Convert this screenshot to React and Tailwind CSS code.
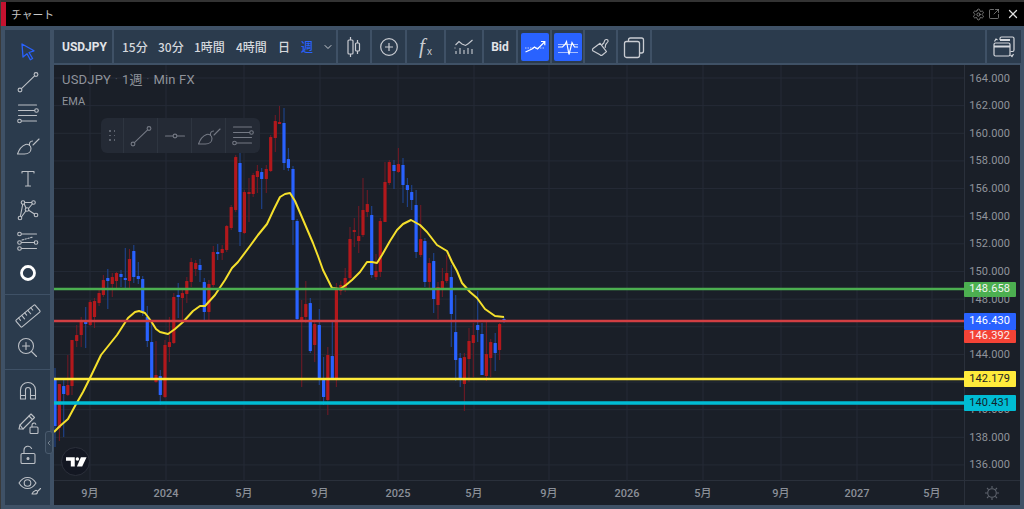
import React from "react";
import { Settings, SquareArrowOutUpRight, X, ChevronDown, ChevronLeft } from "lucide-react";

const CANDLES = [
  [55, 368, 447, 378, 426, "b"], [59.4, 384, 441, 384, 428, "r"], [63.7, 380, 437, 386, 394, "b"],
  [67.8, 355, 396, 385, 395, "r"], [72, 340, 395, 340, 386, "r"], [76.7, 325, 347, 335, 341, "r"],
  [81.2, 317, 347, 320, 335, "r"], [85.7, 307, 348, 321, 324, "b"], [90.2, 300, 326, 302, 325, "r"],
  [94.5, 298, 328, 301, 317, "r"], [99.1, 290, 306, 293, 303, "r"], [103.4, 275, 297, 280, 295, "r"],
  [107.8, 269, 309, 278, 281, "b"], [112.3, 273, 297, 277, 284, "r"], [116.5, 272, 289, 273, 281, "r"],
  [121, 270, 287, 274, 277, "b"], [125.3, 248, 288, 278, 280, "b"], [129.5, 249, 288, 259, 281, "r"],
  [133.8, 245, 283, 251, 277, "b"], [138.3, 262, 284, 276, 279, "b"], [142.7, 276, 316, 279, 312, "b"],
  [147.3, 306, 347, 317, 341, "b"], [151.7, 320, 380, 342, 378, "b"], [156, 341, 383, 375, 382, "r"],
  [160.3, 370, 405, 376, 395, "b"], [165, 340, 398, 345, 397, "r"], [169.4, 317, 362, 342, 347, "r"],
  [173.8, 293, 344, 297, 343, "r"], [178.2, 283, 318, 295, 297, "b"], [182.4, 288, 320, 293, 298, "r"],
  [186.8, 277, 303, 281, 294, "r"], [191.2, 258, 287, 262, 282, "r"], [195.7, 260, 276, 263, 269, "r"],
  [200, 259, 282, 265, 270, "b"], [204.3, 278, 320, 282, 312, "b"], [208.9, 280, 320, 284, 312, "r"],
  [213.3, 246, 287, 252, 285, "r"], [217.7, 244, 260, 252, 253, "b"], [222.2, 245, 260, 249, 253, "r"],
  [226.7, 225, 252, 226, 250, "r"], [231.2, 205, 230, 207, 228, "r"], [235.7, 155, 212, 157, 210, "r"],
  [240, 147, 246, 163, 232, "b"], [244.4, 190, 234, 192, 233, "r"], [249, 178, 222, 192, 194, "r"],
  [253.2, 173, 197, 175, 194, "r"], [257.4, 165, 193, 171, 177, "r"], [261.7, 168, 209, 172, 179, "b"],
  [266.3, 165, 193, 169, 179, "r"], [270.7, 135, 172, 137, 171, "r"], [275.3, 115, 152, 121, 138, "r"],
  [279.5, 106, 123, 122, 123, "r"], [284, 108, 170, 123, 163, "b"], [288.4, 148, 171, 159, 168, "b"],
  [293, 166, 245, 169, 220, "b"], [297.1, 219, 321, 221, 319, "b"], [301.7, 300, 387, 317, 322, "r"],
  [305.8, 281, 323, 304, 317, "r"], [310.3, 298, 353, 303, 351, "b"], [314.7, 320, 362, 324, 345, "r"],
  [319.3, 309, 385, 325, 378, "b"], [323.6, 357, 405, 380, 397, "b"], [327.8, 347, 415, 355, 400, "r"],
  [332.3, 320, 380, 356, 379, "b"], [336.4, 283, 387, 289, 378, "r"], [340.8, 281, 295, 285, 291, "r"],
  [345.2, 268, 292, 278, 288, "r"], [350, 227, 281, 239, 278, "r"], [354.3, 218, 247, 230, 232, "r"],
  [358.7, 206, 253, 236, 241, "r"], [363, 178, 237, 210, 235, "r"], [367.3, 190, 217, 204, 212, "r"],
  [371.7, 206, 278, 215, 275, "b"], [376, 254, 280, 271, 277, "r"], [380.3, 218, 277, 221, 272, "r"],
  [385, 162, 222, 182, 222, "r"], [389.3, 160, 185, 162, 183, "r"], [394, 160, 189, 165, 171, "b"],
  [398.4, 148, 173, 164, 172, "r"], [403, 158, 203, 165, 185, "b"], [407.4, 178, 207, 185, 190, "b"],
  [411.7, 185, 210, 192, 200, "b"], [416.1, 190, 258, 205, 252, "b"], [420.7, 205, 257, 239, 255, "r"],
  [424.9, 238, 287, 241, 282, "b"], [429.3, 258, 290, 263, 282, "r"], [433.7, 253, 313, 261, 299, "b"],
  [438, 282, 319, 287, 305, "r"], [442.4, 268, 297, 281, 289, "r"], [446.7, 255, 283, 273, 281, "r"],
  [451.3, 265, 347, 277, 314, "b"], [455.7, 295, 381, 332, 360, "b"], [460.2, 353, 387, 358, 380, "b"],
  [464.4, 353, 411, 357, 384, "r"], [469, 328, 382, 341, 359, "r"], [473.3, 323, 377, 335, 343, "r"],
  [477.7, 291, 342, 325, 330, "b"], [482, 323, 375, 334, 375, "b"], [486.4, 322, 381, 354, 376, "r"],
  [490.7, 339, 377, 342, 358, "r"], [495.2, 333, 371, 343, 353, "b"], [499.6, 323, 360, 324, 350, "r"],
  [504, 317, 323, 319, 322, "b"],
];

const EMA =
  "54,432 60,426 68,419 75,406 83,392 90,378 101,355 109,345 117,335 128,318 135,312 139,311 145,313 151,321 156,329 160,332 168,334 175,329 183,322 193,311 200,306 205,306 215,295 225,280 232,268 238,262 250,246 258,235 267,224 274,209 280,197 285,194 290,193 295,201 304,222 313,243 318,256 323,270 332,288 340,289 346,285 352,280 360,272 367,262 372,262 377,263 382,255 390,241 397,230 403,224 411,220 420,225 427,232 437,245 447,251 452,262 457,271 462,283 470,292 477,298 485,309 495,316 504,317";

const GRID_X = [90, 166, 244, 320, 398, 474, 549, 627, 703, 781, 857, 932];
const PRICES = ["164.000", "162.000", "160.000", "158.000", "156.000", "154.000", "152.000", "150.000", "148.000", "", "144.000", "", "140.000", "138.000", "136.000"];
const TIME = [["9月", 90], ["2024", 166], ["5月", 244], ["9月", 320], ["2025", 398], ["5月", 474], ["9月", 549], ["2026", 627], ["5月", 703], ["9月", 781], ["2027", 857], ["5月", 932]];
const TAGS = [
  ["148.658", "top-[217px] h-[15px] bg-[#4caf50] text-[#f2f5f2]"],
  ["146.430", "top-[248px] h-[17px] bg-[#2962ff] text-white"],
  ["146.392", "top-[265px] h-[13px] bg-[#f44336] text-[#fbeeee]"],
  ["142.179", "top-[306px] h-[16px] bg-[#ffeb3b] text-[#1b1f27]"],
  ["140.431", "top-[330px] h-[16px] bg-[#00bcd4] text-[#12222b]"],
];

const I = ({ children, s = 28, className = "" }) => (
  <svg width={s} height={s} viewBox="0 0 28 28" fill="none" stroke="currentColor" strokeWidth="1.1" strokeLinecap="round" strokeLinejoin="round" className={className}>
    {children}
  </svg>
);

const LineIcon = () => (<I><circle cx="6" cy="22" r="1.9" /><circle cx="22" cy="6.5" r="1.9" /><path d="M7.4 20.6 20.6 7.9" /></I>);
const LinesIcon = () => (<I><path d="M4.5 5h18M4.5 10.5h16M4.5 15.5h18M7.5 21h15" /><circle cx="22.5" cy="10.5" r="1.8" /><circle cx="5.5" cy="21" r="1.8" /></I>);
const BrushIcon = () => (<I><path d="M3.5 22h7c4 0 6.5-2.5 6.5-5.5 0-1.5-.8-2.8-2-3.6-1-.7-2.2-.9-3.4-.5C8 13.800 5 17.500 3.500 22Z" /><path d="M15.500 13.500c-.5-2.500.8-4.500 3-4.500" /><path d="M19 13l6-6" /></I>);

function SideBtn({ children, className = "" }) {
  return <div className={`h-[31.8px] flex items-center justify-center text-[#bcc0c6] ${className}`}>{children}</div>;
}

function LeftBar() {
  return (
    <div className="w-[45px] shrink-0 bg-[#2b3b4d] flex flex-col">
      <div className="h-[265px] pt-[5px] border-b border-[#3f5166]">
        <SideBtn>
          <svg width="24" height="24" viewBox="0 0 24 24" fill="none" stroke="#2962ff" strokeWidth="1.3" strokeLinejoin="round" className="translate-y-[1px]"><path d="M6 4l12 6.800-5 1.700 3.600 6-2.300 1.300-3.300-6L7 17Z" /></svg>
        </SideBtn>
        <SideBtn className="-translate-y-[1px]"><LineIcon /></SideBtn>
        <SideBtn><LinesIcon /></SideBtn>
        <SideBtn><BrushIcon /></SideBtn>
        <SideBtn><I><path d="M8 9V7.500h12V9M14 7.500V22M11.500 22h5" /></I></SideBtn>
        <SideBtn>
          <I>
            <circle cx="6" cy="22" r="1.800" /><circle cx="9" cy="6.500" r="1.800" /><circle cx="19.500" cy="6.500" r="1.800" /><circle cx="22" cy="19" r="1.800" /><circle cx="13" cy="13.500" r="1.800" />
            <path d="M6.400 20.200 8.700 8.300M10.200 8 12 12M18.300 8 14.500 12.500M14.700 14.300 20.400 18M7.400 21 11.800 15M10.800 6.500h6.800" />
          </I>
        </SideBtn>
        <SideBtn>
          <I>
            <path d="M7.500 6h15M7.500 14.500h13M7.500 20.500h15" /><path d="M8 12l11-3" strokeDasharray="1.500 1.500" />
            <circle cx="5.500" cy="6" r="1.800" /><circle cx="5.500" cy="14.500" r="1.800" /><circle cx="5.500" cy="20.500" r="1.800" /><circle cx="22" cy="14.500" r="1.800" />
          </I>
        </SideBtn>
        <SideBtn><svg width="20" height="20" viewBox="0 0 20 20" fill="none" stroke="#ffffff" strokeWidth="2.800"><circle cx="10" cy="10" r="6.500" /></svg></SideBtn>
      </div>
      <div className="h-[75px] pt-[5px] border-b border-[#3f5166]">
        <SideBtn>
          <I s={28}>
            <g transform="rotate(-40 14 14)">
              <rect x="1.500" y="9.500" width="25" height="9" rx="1" />
              <path d="M5.500 9.500v3M9.500 9.500v4.500M13.500 9.500v3M17.500 9.500v4.500M21.500 9.500v3" />
            </g>
          </I>
        </SideBtn>
        <SideBtn>
          <I>
            <circle cx="12" cy="12" r="7.500" /><path d="M12 8.500v7M8.500 12h7M17.500 17.500l5 5" />
          </I>
        </SideBtn>
      </div>
      <div className="flex-1 pt-[5px]">
        <SideBtn>
          <I>
            <path d="M6.500 22V13a7.500 7.500 0 0 1 15 0v9h-5v-9a2.500 2.500 0 0 0-5 0v9Z" /><path d="M6.500 18.500h5M16.500 18.500h5" />
          </I>
        </SideBtn>
        <SideBtn>
          <I>
            <path d="M5 20l1-4L17 5l3.500 3.500L9 20Z" /><path d="M6 16l3 4M15 7l3.500 3.500" />
            <rect x="16" y="18" width="8" height="6.500" rx="1" /><path d="M18 18v-2a2 2 0 0 1 3.800-.8" />
          </I>
        </SideBtn>
        <SideBtn className="translate-y-[1px]">
          <I>
            <rect x="7" y="12.500" width="14" height="10" rx="1.300" /><path d="M10 12.500V9a4 4 0 0 1 7.600-1.500" /><circle cx="14" cy="17.500" r="1" fill="currentColor" />
          </I>
        </SideBtn>
        <SideBtn>
          <I>
            <path d="M5 11c2.500-4 5.700-5.500 8.500-5.500S19.500 7 22 11c-2.500 4-5.700 5.500-8.500 5.500S7.500 15 5 11Z" /><circle cx="13.500" cy="11" r="3.300" />
            <path d="M18 22h3c1.500 0 2.500-1 2.500-2.300 0-1-1-1.500-2-1.200-1.500.5-3 2-3.500 3.500ZM24 19l2.500-2.500" />
          </I>
        </SideBtn>
      </div>
    </div>
  );
}

function Cell({ w, children }) {
  return <div className={`${w} shrink-0 h-full border-r-2 border-[#3f5166] flex items-center justify-center text-[#c9ccd2]`}>{children}</div>;
}

function TopBar() {
  const tf = "font-['Noto_Sans_CJK_JP',sans-serif] text-[12px] font-medium text-[#d5d8dd]";
  return (
    <div className="h-[33px] mr-[-1px] shrink-0 bg-[#2b3b4d] flex items-center">
      <div className="w-[60px] h-full shrink-0 border-r-2 border-[#3f5166] flex items-center pl-2 font-['Roboto',sans-serif] text-[12px] font-bold text-[#e2e4e8]">USDJPY</div>
      <div className={`w-[224px] h-full shrink-0 border-r-2 border-[#3f5166] flex items-center pl-2 whitespace-nowrap ${tf}`}>
        <span className="w-[36px] shrink-0">15分</span>
        <span className="w-[36px] shrink-0">30分</span>
        <span className="w-[42px] shrink-0">1時間</span>
        <span className="w-[42px] shrink-0">4時間</span>
        <span className="w-[23px] shrink-0">日</span>
        <span className="w-[21px] shrink-0 text-[#2962ff]">週</span>
        <ChevronDown size={12} className="text-[#c9ccd2] shrink-0" />
      </div>
      <Cell w="w-[34px]">
        <svg width="24" height="24" viewBox="0 0 24 24" fill="none" stroke="currentColor" strokeWidth="1.200"><rect x="6" y="5" width="5" height="14" rx="1" /><path d="M8.500 2v3M8.500 19v3M15.500 5v3M15.500 16v3" /><rect x="13.500" y="8" width="4" height="8" rx="1" /></svg>
      </Cell>
      <Cell w="w-[35px]">
        <svg width="24" height="24" viewBox="0 0 24 24" fill="none" stroke="currentColor" strokeWidth="1.200"><circle cx="12" cy="12" r="8.300" /><path d="M12 8v8M8 12h8" /></svg>
      </Cell>
      <Cell w="w-[39px]">
        <span className="flex items-end font-['Liberation_Serif',serif] italic text-[#c9ccd2] leading-none">
          <span className="text-[21px]">f</span>
          <span className="text-[10px] not-italic font-['Liberation_Sans',sans-serif] ml-[2px]">x</span>
        </span>
      </Cell>
      <Cell w="w-[38px]">
        <svg width="24" height="24" viewBox="0 0 24 24" fill="none" stroke="currentColor" strokeWidth="1.100"><path d="M3.500 10 7 6.500l3 2.500 3.500 1.500 3-2 4-3.500" /><path d="M4 19v-3M8 19v-6M12 19v-4M16 19v-6M20 19v-5" /><path d="M2.500 13h1" /></svg>
      </Cell>
      <Cell w="w-[34px]"><span className="font-['Roboto',sans-serif] text-[12px] font-bold text-[#e2e4e8]">Bid</span></Cell>
      <Cell w="w-[34px]">
        <div className="w-[28px] h-[28px] ml-[1px] rounded-[2px] bg-[#2962ff] flex items-center justify-center">
          <svg width="24" height="24" viewBox="0 0 24 24" fill="none" stroke="#fff" strokeWidth="1.200"><path d="M2 13h20" strokeWidth=".7" strokeDasharray="1.500 1" /><path d="M2.500 17 9 14l2.500-2 3 2 7-7M18 6.500h3.800v3.800" /></svg>
        </div>
      </Cell>
      <Cell w="w-[33px]">
        <div className="w-[28px] h-[28px] ml-[1px] rounded-[2px] bg-[#2962ff] flex items-center justify-center">
          <svg width="24" height="24" viewBox="0 0 24 24" fill="none" stroke="#fff" strokeWidth="1.200"><path d="M2 9.500h20M2 17.500h20" strokeWidth=".6" /><path d="M2 12h4.500l2.500-2.500 1.500-3 2.500 13 3-12 2.500 4.500H22" /></svg>
        </div>
      </Cell>
      <Cell w="w-[33px]">
        <svg width="22" height="22" viewBox="0 0 24 24" fill="none" stroke="currentColor" strokeWidth="1.300" strokeLinejoin="round"><path d="M3 14 11 8l7 9-4.500 3.800c-.8.600-1.800.5-2.500-.3L3 16c-.4-.7-.4-1.500 0-2Z" /><path d="M13 9.500l2-1.800 1-2.700c.5-1.200 2.700-1.700 3.500-.5.700 1.200 0 2.300-1 3l-1.500 2-.5 3.500" /></svg>
      </Cell>
      <Cell w="w-[34px]">
        <svg width="24" height="24" viewBox="0 0 24 24" fill="none" stroke="currentColor" strokeWidth="1.300"><rect x="2.500" y="6.500" width="15" height="16" rx="2" /><path d="M6.500 6.500V5a2 2 0 0 1 2-2h11a2 2 0 0 1 2 2v11a2 2 0 0 1-2 2h-2" /></svg>
      </Cell>
      <div className="flex-1 h-full border-r-2 border-[#3f5166]" />
      <div className="w-[34px] shrink-0 h-full flex items-center justify-center text-[#d5d8dd]">
        <svg width="26" height="26" viewBox="0 0 26 26" fill="none" stroke="currentColor" strokeWidth="1.200">
          <path d="M9 6V4.500A1.500 1.500 0 0 1 10.500 3h11A1.500 1.500 0 0 1 23 4.500V16a1.500 1.500 0 0 1-1.500 1.500h-2" />
          <rect x="3" y="9" width="16" height="13" rx="1.500" />
          <path d="M3 12.500h16M9 6h10" strokeWidth="2.200" />
          <path d="M3.500 7.500 5 5l1.500 1M22.500 20 21 22.500 19.500 21" />
        </svg>
      </div>
    </div>
  );
}

function Plot() {
  return (
    <svg width="910" height="416" viewBox="54 65 910 416" className="block">
      {PRICES.map((_, i) => (<line key={i} x1="54" x2="964" y1={78 + i * 27.64} y2={78 + i * 27.64} stroke="#252b36" strokeWidth="1" />))}
      {GRID_X.map((x) => (<line key={x} x1={x} x2={x} y1="65" y2="481" stroke="#252b36" strokeWidth="1" />))}
      {CANDLES.map(([x, wt, wb, bt, bb, c], i) => (
        <g key={i}>
          <line x1={x} x2={x} y1={wt} y2={wb} stroke={c === "r" ? "#6d1a25" : "#1f448f"} strokeWidth="1.100" />
          <rect x={x - 1.6} y={bt} width="3.200" height={Math.max(bb - bt, 2)} rx="0.500" fill={c === "r" ? "#b2181c" : "#2962ff"} />
        </g>
      ))}
      <polyline points={EMA} fill="none" stroke="#f5e02c" strokeWidth="2" strokeLinejoin="round" />
      <line x1="54" x2="964" y1="289" y2="289" stroke="#4caf50" strokeWidth="2.500" />
      <line x1="54" x2="964" y1="321" y2="321" stroke="#d23f43" strokeWidth="2.500" />
      <line x1="54" x2="964" y1="379" y2="379" stroke="#ffeb3b" strokeWidth="2.500" />
      <line x1="54" x2="964" y1="403" y2="403" stroke="#00bcd4" strokeWidth="3.500" />
    </svg>
  );
}

function Floating() {
  return (
    <div className="absolute left-[47px] top-[53px] w-[159px] h-[35px] rounded-[6px] bg-[#242a35] flex items-center text-[#747984]">
      <div className="w-[23px] h-full border-r border-[#2e3540] flex items-center justify-center">
        <div className="grid grid-cols-2 gap-x-[3px] gap-y-[3px]">
          {[0, 1, 2, 3, 4, 5].map((k) => (<span key={k} className="w-[1.500px] h-[1.500px] bg-[#5d636e]" />))}
        </div>
      </div>
      <div className="w-[34px] h-full border-r border-[#2e3540] flex items-center justify-center"><LineIcon /></div>
      <div className="w-[34px] h-full border-r border-[#2e3540] flex items-center justify-center">
        <I><path d="M4.500 14h7.500M16 14h7.500" /><circle cx="14" cy="14" r="1.900" /></I>
      </div>
      <div className="w-[34px] h-full border-r border-[#2e3540] flex items-center justify-center"><BrushIcon /></div>
      <div className="flex-1 h-full flex items-center justify-center"><LinesIcon /></div>
    </div>
  );
}

function Chart() {
  return (
    <div className="relative flex-1 bg-[#1a1f28] flex flex-col overflow-hidden font-['Roboto',sans-serif]">
      <div className="flex h-[416px] shrink-0 border-b border-[#2a303b]">
        <div className="relative w-[910px] shrink-0">
          <Plot />
          <div className="absolute left-[8px] top-[6px] flex items-center gap-[4px] text-[13px] leading-[18px] tracking-[0.2px] text-[#8f939b] font-['Roboto','Noto_Sans_CJK_JP',sans-serif]">
            <span>USDJPY</span><span className="text-[#555a63] text-[10px]">·</span><span>1週</span><span className="text-[#555a63] text-[10px]">·</span><span>Min FX</span>
          </div>
          <div className="absolute left-[8px] top-[30px] text-[11px] leading-[14px] text-[#8f939b]">EMA</div>
          <Floating />
          <div className="absolute left-[7px] top-[382px] w-[29px] h-[29px] rounded-full bg-[#131722] border border-[#2c303b] flex items-center justify-center">
            <svg width="21" height="10" viewBox="0 0 24 11" fill="#ffffff" className="translate-x-[1px]"><path d="M0 0h10v10.500H5.500V4H0Z" /><circle cx="13" cy="2" r="2" /><path d="M17 0h6.500l-5 10.500h-6Z" /></svg>
          </div>
        </div>
        <div className="flex-1 border-l border-[#2a303b] flex flex-col text-[11px] text-[#8f939b] tracking-[0.1px]">
          {PRICES.map((p, i) => (
            <div key={i} className="h-[27.64px] shrink-0 flex items-center justify-end pr-[10px]">{p}</div>
          ))}
        </div>
      </div>
      <div className="relative flex-1 text-[11px] text-[#8b8f98] font-['Roboto','Noto_Sans_CJK_JP',sans-serif]">
        {TIME.map(([t, x], i) => (
          <span key={i} className="absolute top-[5px] -translate-x-1/2 font-medium" style={{ left: x - 54 }}>{t}</span>
        ))}
        <div className="absolute left-[910px] top-0 bottom-0 border-l border-[#2a303b]" />
        <svg width="16" height="16" viewBox="0 0 16 16" fill="none" stroke="#5f646e" strokeWidth="1.100" className="absolute left-[930px] top-[4px]">
          <circle cx="8" cy="8" r="4.300" />
          <path d="M8 1v2.200M8 12.800V15M1 8h2.200M12.800 8H15M3 3l1.600 1.600M11.400 11.400 13 13M13 3l-1.600 1.600M4.600 11.400 3 13" />
        </svg>
      </div>
      {TAGS.map(([t, c]) => (
        <div key={t} className={`absolute left-[910px] w-[52px] rounded-[1px] flex items-center justify-end pr-[6px] text-[11px] tracking-[0.1px] ${c}`}>{t}</div>
      ))}
    </div>
  );
}

export default function App() {
  return (
    <div className="w-[1024px] h-[509px] bg-[#3f5166] border-l border-[#3a3a3a] flex flex-col overflow-hidden relative">
      <div className="h-[26px] shrink-0 bg-black border-t-2 border-t-[#333333] flex items-center text-[#c8c8c8] -ml-[1px]">
        <div className="w-[5px] ml-[1px] h-full bg-[#c4122f]" />
        <span className="ml-[5px] text-[10.800px] font-['Noto_Sans_CJK_JP',sans-serif]">チャート</span>
        <div className="ml-auto flex items-center gap-[3px] pr-[4px] text-[#a4a4a4]">
          <Settings size={13} strokeWidth={1.300} />
          <SquareArrowOutUpRight size={12} strokeWidth={1.300} />
          <X size={14} strokeWidth={2.200} className="text-[#e0e0e0] ml-[3px]" />
        </div>
      </div>
      <div className="flex-1 flex pt-[4px] pb-[4px] pl-[4px] pr-[4px] gap-[4px] min-h-0 relative">
        <LeftBar />
        <div className="flex-1 flex flex-col gap-[2px] min-w-0">
          <TopBar />
          <Chart />
        </div>
        <div className="absolute left-[44px] top-[405px] w-[8px] h-[23px] rounded-[3px] bg-[#2f3f51] border border-[#4a5b6e] flex items-center justify-center text-[#9aa3ad]">
          <ChevronLeft size={8} strokeWidth={2} className="shrink-0" />
        </div>
      </div>
    </div>
  );
}
